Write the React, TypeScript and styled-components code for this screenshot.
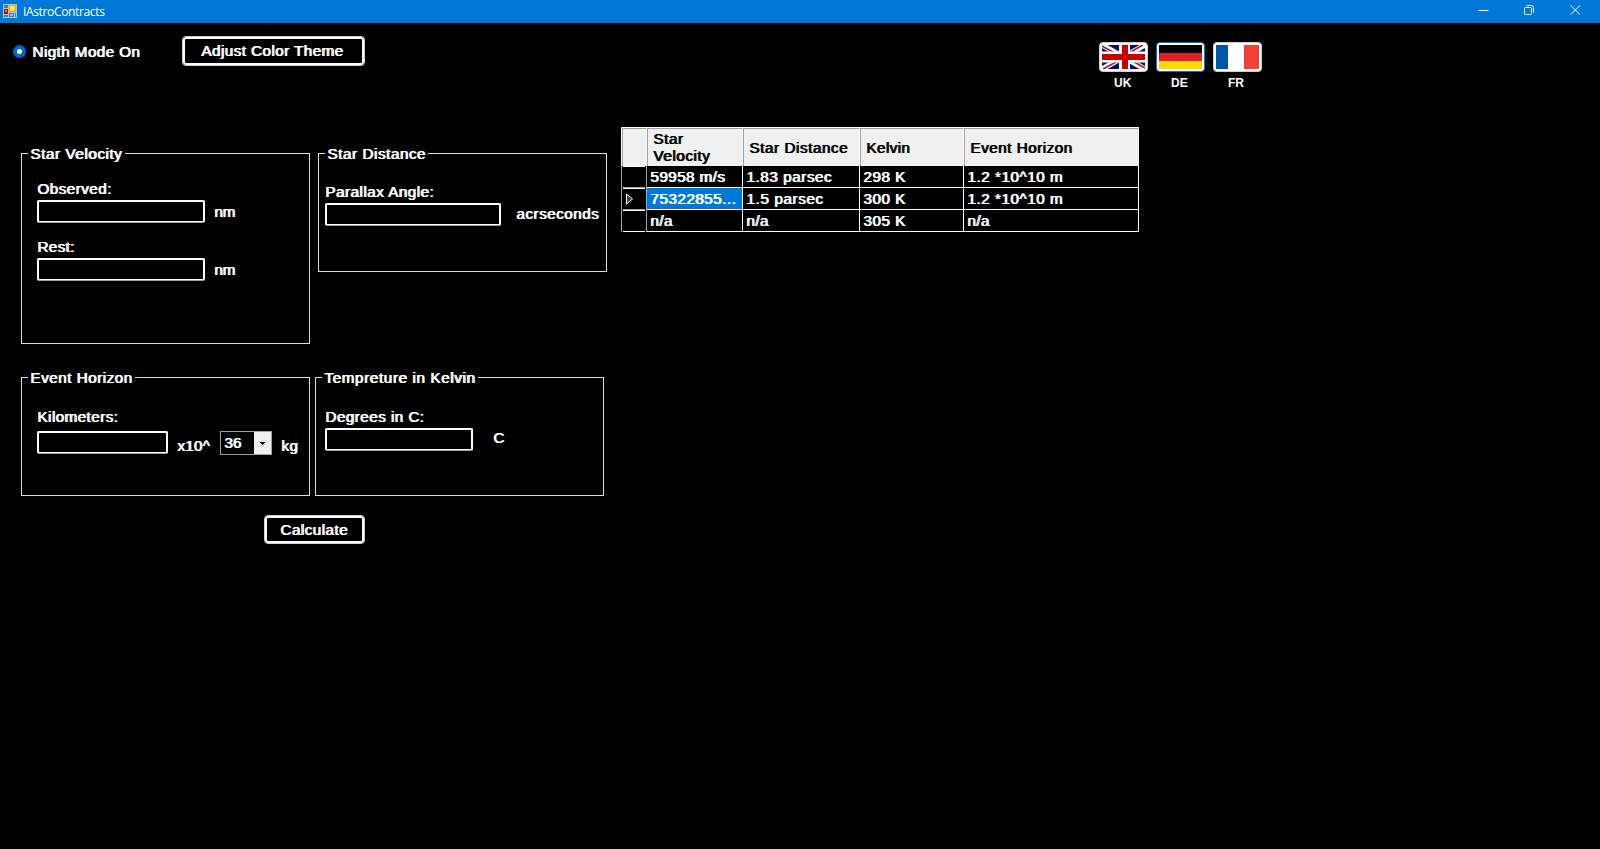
import React from "react";
import styled, { createGlobalStyle } from "styled-components";

const Global = createGlobalStyle`
  *, *::before, *::after { box-sizing: border-box; }
  body { margin: 0; background: #000; overflow: hidden; }
`;

const Window = styled.div`
  display: flex;
  flex-direction: column;
  width: 1600px;
  height: 849px;
  background: #000;
  color: #fff;
  font: 14px/16px "Liberation Sans", Arial, sans-serif;
`;

/* Windows style synthetic bold: the regular face struck twice, one pixel apart */
const Text = styled.span<{ $track?: number; $ml?: number; $mt?: number }>`
  display: block;
  white-space: nowrap;
  letter-spacing: ${(p) => p.$track ?? 0.45}px;
  margin-left: ${(p) => p.$ml ?? 0}px;
  margin-top: ${(p) => p.$mt ?? 0}px;
  text-shadow: 0.95px 0 0 currentColor;
  transform: scaleX(1.083);
  transform-origin: 0 0;
`;

const TitleBar = styled.header`
  display: flex;
  height: 23px;
  background: #0078d7;
  flex: none;
  padding: 4px 19px 0 3px;
`;

const Title = styled.span`
  font: 12px/16px "Open Sans", "Noto Sans", sans-serif;
  letter-spacing: -0.35px;
  margin-left: 6px;
  flex: 1;
`;

const WindowControls = styled.div`
  display: flex;
  gap: 35px;
`;

const Toolbar = styled.div`
  display: flex;
  align-items: flex-start;
  height: 104px;
  flex: none;
  padding: 13px 0 0 13px;
`;

const RadioLabel = styled.label`
  display: flex;
  width: 169px;
  margin-top: 8px;
`;

const Radio = styled.span`
  width: 13px;
  height: 13px;
  margin: 1px 6px 0 0;
  border-radius: 50%;
  border: 4px solid #0067c0;
  background: #fff;
`;

const Button = styled.button<{ $w: number; $h: number; $pad: number }>`
  display: flex;
  width: ${(p) => p.$w}px;
  height: ${(p) => p.$h}px;
  padding: 6px 0 0 ${(p) => p.$pad}px;
  border: 1px solid #d0d0d0;
  border-radius: 4px;
  background: #000;
  box-shadow: inset 0 0 0 2px #fff;
  color: inherit;
  font: inherit;
`;

const Flags = styled.div`
  display: flex;
  gap: 8px;
  margin: 6px 0 0 734px;
`;

const FlagItem = styled.div`
  display: flex;
  flex-direction: column;
  gap: 4px;
  width: 49px;
`;

const FlagLabel = styled.span`
  padding-left: 15px;
  font-size: 12px;
  font-weight: bold;
  line-height: 14px;
`;

const FlagButton = styled.button<{ $active?: boolean }>`
  display: flex;
  width: 49px;
  height: 30px;
  padding: 2px;
  border: 1px solid ${(p) => (p.$active ? "#0078d7" : "#d0d0d0")};
  border-radius: 4px;
  background: #fff;
`;

const Content = styled.main`
  display: flex;
  align-items: flex-start;
  padding-left: 21px;
`;

const Forms = styled.div`
  display: flex;
  flex-direction: column;
  width: 600px;
  padding-top: 26px;
`;

const FormRow = styled.div<{ $gap: number; $h: number }>`
  display: flex;
  align-items: flex-start;
  gap: ${(p) => p.$gap}px;
  height: ${(p) => p.$h}px;
`;

const CalculateSlot = styled.div`
  padding-left: 243px;
`;

const GroupBox = styled.section<{ $h: number; $pad: number }>`
  width: 289px;
  height: ${(p) => p.$h}px;
  border: 1px solid #dcdcdc;
  padding-left: ${(p) => p.$pad}px;
`;

const Legend = styled.h2<{ $w: number; $pad: number }>`
  width: ${(p) => p.$w}px;
  height: 16px;
  margin: -8px 0 0 ${(p) => 6 - p.$pad}px;
  padding-left: 2px;
  background: #000;
  font: inherit;
`;

const Field = styled.div`
  display: flex;
  align-items: flex-start;
`;

const Input = styled.input<{ $w: number; $mt?: number }>`
  width: ${(p) => p.$w}px;
  height: 23px;
  margin: ${(p) => p.$mt ?? 0}px 0 0;
  padding: 0 3px;
  border: 2px solid #fff;
  border-bottom: 1px solid #a0a0a0;
  border-radius: 2px;
  background: #000;
  box-shadow: inset 0 -1px 0 #fff;
  color: #fff;
  font: inherit;
  outline: 0;
`;

const Combo = styled.div`
  display: flex;
  width: 52px;
  height: 24px;
  margin: 6px 0 0 13px;
  border: 1px solid #a0a0a0;
`;

const ComboValue = styled.div`
  width: 33px;
  padding: 3px 0 0 3px;
`;

const ComboArrow = styled.div`
  display: flex;
  flex: 1;
  justify-content: center;
  padding-top: 10px;
  background: #f0f0f0;
`;

const Grid = styled.div`
  display: grid;
  grid-template-columns: 25px 96px 117px 104px 175px;
  grid-template-rows: 38px repeat(3, 22px);
  border-top: 1px solid #fff;
  border-left: 1px solid #a0a0a0;
`;

const HeaderCell = styled.div<{ $corner?: boolean }>`
  display: flex;
  align-items: center;
  padding: 2px 0 0 5px;
  border-top: 1px solid #a0a0a0;
  border-left: 1px solid #a0a0a0;
  border-right: 1px solid #fff;
  background: #f0f0f0;
  box-shadow: ${(p) => (p.$corner ? "-1px 0 0 #fff" : "none")};
  color: #000;
  line-height: 17px;
`;

const TwoLines = styled.div`
  margin-bottom: 1px;
`;

const RowHeader = styled.div`
  display: flex;
  padding: 0 1px 0 1px;
  border-right: 1px solid #a0a0a0;
`;

const RowHeaderFace = styled.div<{ $last?: boolean }>`
  display: flex;
  flex: 1;
  height: 22px;
  padding: 4px 0 0 3px;
  border-top: 1px solid #fff;
  border-bottom: 1px solid ${(p) => (p.$last ? "#fff" : "#a0a0a0")};
`;

const Cell = styled.div<{ $selected?: boolean }>`
  padding: 3px 0 0 3px;
  border-right: 1px solid #fff;
  border-bottom: 1px solid #fff;
  background: ${(p) => (p.$selected ? "#0078d7" : "#000")};
`;

const AppIcon = () => (
  <svg width="14" height="14" viewBox="0 0 14 14">
    <rect width="14" height="14" fill="#c3c0b8" />
    <path d="M1 1h4v3H1zM1 11h4v2H1zM12 9h1v4h-1z" fill="#2b87d3" />
    <rect x="6" y="1" width="7" height="7" fill="#e8a90c" />
    <rect x="7" y="2" width="5" height="5" fill="#ffe06a" />
    <rect x="1" y="5" width="4" height="5" fill="#a91208" />
    <rect x="2" y="6" width="2" height="2" fill="#f06a50" />
    <rect x="6" y="9" width="5" height="4" fill="#3c6fe0" />
    <rect x="7" y="10" width="3" height="2" fill="#9cc0ff" />
  </svg>
);

const UkFlag = () => (
  <svg width="43" height="24" viewBox="0 0 43 24">
    <rect width="43" height="24" fill="#00115f" />
    <path d="M0 0L43 24M43 0L0 24" stroke="#fff" strokeWidth="5.4" />
    <path d="M0 1L18 11M43 23L25 13M41 0L25 9M1 24L18 15" stroke="#b5202c" strokeWidth="1.8" />
    <path d="M22.5 0V24M0 12H43" stroke="#fff" strokeWidth="11" />
    <path d="M23 0V24M0 12H43" stroke="#c00" strokeWidth="6" />
  </svg>
);

const DeFlag = () => (
  <svg width="43" height="24" viewBox="0 0 43 24">
    <rect width="43" height="8" fill="#000" />
    <rect y="8" width="43" height="8" fill="#e01f26" />
    <rect y="16" width="43" height="8" fill="#ffd800" />
  </svg>
);

const FrFlag = () => (
  <svg width="43" height="24" viewBox="0 0 43 24">
    <rect width="43" height="24" fill="#fff" />
    <rect width="12" height="24" fill="#0055a4" />
    <rect x="28" width="15" height="24" fill="#ef4135" />
  </svg>
);

const ROWS = [
  [["59958 m/s", 0.42], ["1.83 parsec", 0.55], ["298 K", 0.5], ["1.2 *10^10 m", 0.52]],
  [["75322855...", 0.5], ["1.5 parsec", 0.6], ["300 K", 0.5], ["1.2 *10^10 m", 0.52]],
  [["n/a", 0.4], ["n/a", 0.4], ["305 K", 0.5], ["n/a", 0.4]],
] as [string, number][][];

export default function App() {
  return (
    <Window>
      <Global />
      <TitleBar>
        <AppIcon />
        <Title>IAstroContracts</Title>
        <WindowControls>
          <svg width="11" height="12" viewBox="0 0 11 12">
            <path d="M0.5 6.5H10.5" stroke="#fff" />
          </svg>
          <svg width="11" height="12" viewBox="0 0 11 12" fill="none" stroke="#fff">
            <rect x="0.5" y="3.5" width="7" height="7" rx="1" />
            <path d="M2.5 1.5H7.5Q9.5 1.5 9.5 3.5V8.5" />
          </svg>
          <svg width="11" height="12" viewBox="0 0 11 12">
            <path d="M0.5 1.5L10 10.5M10 1.5L0.5 10.5" stroke="#fff" />
          </svg>
        </WindowControls>
      </TitleBar>

      <Toolbar>
        <RadioLabel>
          <Radio />
          <Text $track={0.42}>Nigth Mode On</Text>
        </RadioLabel>
        <Button $w={183} $h={30} $pad={18}>
          <Text $track={0.43}>Adjust Color Theme</Text>
        </Button>
        <Flags>
          <FlagItem>
            <FlagButton><UkFlag /></FlagButton>
            <FlagLabel>UK</FlagLabel>
          </FlagItem>
          <FlagItem>
            <FlagButton $active><DeFlag /></FlagButton>
            <FlagLabel>DE</FlagLabel>
          </FlagItem>
          <FlagItem>
            <FlagButton><FrFlag /></FlagButton>
            <FlagLabel>FR</FlagLabel>
          </FlagItem>
        </Flags>
      </Toolbar>

      <Content>
        <Forms>
          <FormRow $gap={8} $h={224}>
            <GroupBox $h={191} $pad={15}>
              <Legend $w={97} $pad={15}><Text $track={0.55}>Star Velocity</Text></Legend>
              <Text $mt={19} $track={0.45}>Observed:</Text>
              <Field>
                <Input aria-label="Observed" $w={168} $mt={3} />
                <Text $ml={9} $mt={7} $track={-0.2}>nm</Text>
              </Field>
              <Text $mt={16} $track={0.35}>Rest:</Text>
              <Field>
                <Input aria-label="Rest" $w={168} $mt={3} />
                <Text $ml={9} $mt={7} $track={-0.2}>nm</Text>
              </Field>
            </GroupBox>
            <GroupBox $h={119} $pad={6}>
              <Legend $w={103} $pad={6}><Text $track={0.54}>Star Distance</Text></Legend>
              <Text $mt={22} $track={0.47}>Parallax Angle:</Text>
              <Field>
                <Input aria-label="Parallax Angle" $w={176} $mt={3} />
                <Text $ml={15} $mt={6} $track={0.49}>acrseconds</Text>
              </Field>
            </GroupBox>
          </FormRow>
          <FormRow $gap={5} $h={138}>
            <GroupBox $h={119} $pad={15}>
              <Legend $w={107} $pad={15}><Text $track={0.5}>Event Horizon</Text></Legend>
              <Text $mt={23} $track={0.42}>Kilometers:</Text>
              <Field>
                <Input aria-label="Kilometers" $w={131} $mt={6} />
                <Text $ml={9} $mt={13} $track={0.25}>x10^</Text>
                <Combo>
                  <ComboValue><Text $track={0}>36</Text></ComboValue>
                  <ComboArrow>
                    <svg width="5" height="3" viewBox="0 0 5 3">
                      <path d="M0 0H5V1H4V2H3V3H2V2H1V1H0Z" fill="#000" />
                    </svg>
                  </ComboArrow>
                </Combo>
                <Text $ml={9} $mt={13} $track={0.3}>kg</Text>
              </Field>
            </GroupBox>
            <GroupBox $h={119} $pad={9}>
              <Legend $w={156} $pad={9}><Text $track={0.6}>Tempreture in Kelvin</Text></Legend>
              <Text $mt={23}>Degrees in C:</Text>
              <Field>
                <Input aria-label="Degrees in C" $w={148} $mt={3} />
                <Text $ml={20} $mt={5}>C</Text>
              </Field>
            </GroupBox>
          </FormRow>
          <CalculateSlot>
            <Button $w={101} $h={29} $pad={15}>
              <Text $track={0.45}>Calculate</Text>
            </Button>
          </CalculateSlot>
        </Forms>

        <Grid>
          <HeaderCell $corner />
          <HeaderCell>
            <TwoLines>
              <Text $track={0.55}>Star</Text>
              <Text $track={0.55}>Velocity</Text>
            </TwoLines>
          </HeaderCell>
          <HeaderCell><Text $track={0.55}>Star Distance</Text></HeaderCell>
          <HeaderCell><Text $track={0.4}>Kelvin</Text></HeaderCell>
          <HeaderCell><Text $track={0.5}>Event Horizon</Text></HeaderCell>
          {ROWS.map((row, r) => (
            <React.Fragment key={r}>
              <RowHeader>
                <RowHeaderFace $last={r === 2}>
                  {r === 1 && (
                    <svg width="8" height="12" viewBox="0 0 8 12">
                      <path d="M0.5 1V11L6.5 6Z" fill="#404040" stroke="#fff" />
                    </svg>
                  )}
                </RowHeaderFace>
              </RowHeader>
              {row.map(([text, track], c) => (
                <Cell key={c} $selected={r === 1 && c === 0}>
                  <Text $track={track}>{text}</Text>
                </Cell>
              ))}
            </React.Fragment>
          ))}
        </Grid>
      </Content>
    </Window>
  );
}
